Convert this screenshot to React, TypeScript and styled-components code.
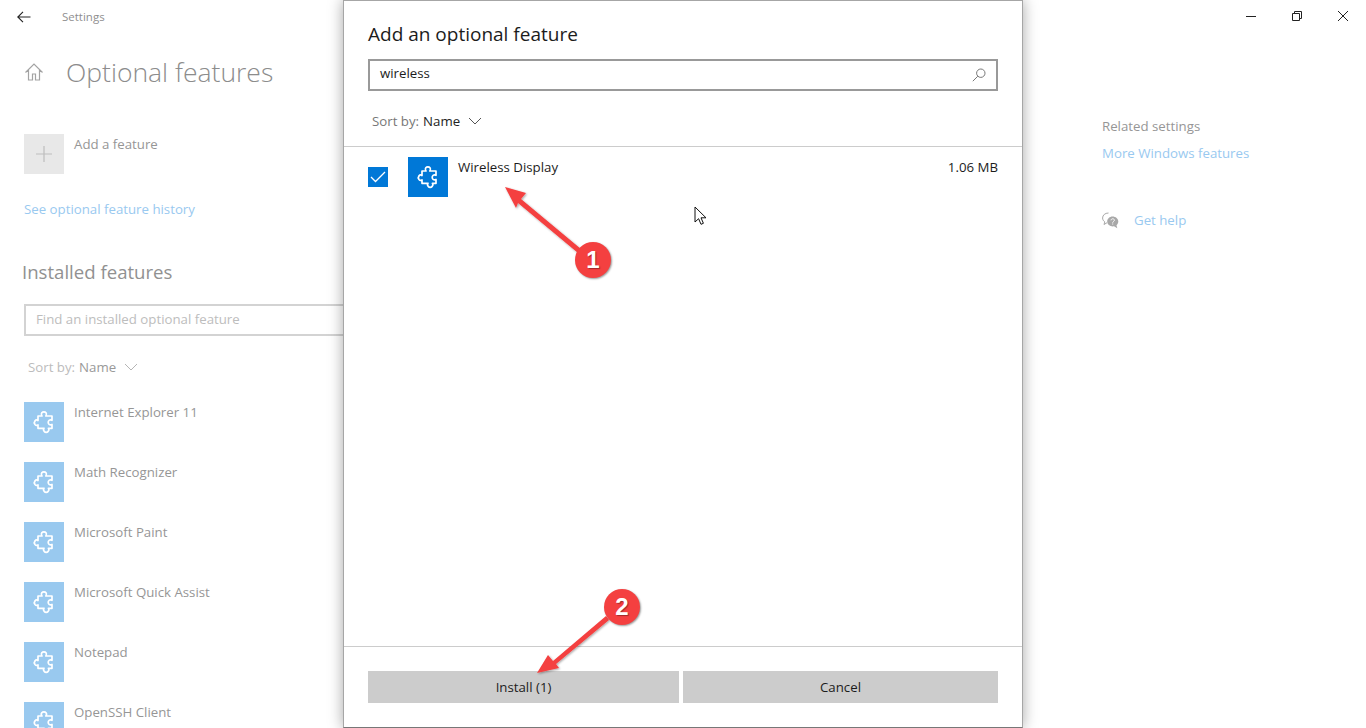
import styled, { createGlobalStyle } from 'styled-components'
import { ReactNode } from 'react'

const GlobalStyle = createGlobalStyle`
  html, body {
    margin: 0;
    background: #fff;
    font-family: 'Open Sans', 'Noto Sans', sans-serif;
  }
`

const installed = [
  'Internet Explorer 11',
  'Math Recognizer',
  'Microsoft Paint',
  'Microsoft Quick Assist',
  'Notepad',
  'OpenSSH Client',
]

const PuzzleIcon = () => (
  <svg width="24" height="24" viewBox="-0.5 0 24 24" fill="none" stroke="#fff" strokeWidth="1.7" strokeLinejoin="round">
    <path d="M5.500 6h4c-.9-1 -.9-2.200 -.2-3.200c1-1.300 3.200-1.300 4.200 0c.7 1 .7 2.200 -.2 3.200H19.500v4.300c-.9-.6 -2-.6 -2.900 .1c-1.200 1-1.200 2.900 0 3.900c.9 .7 2 .7 2.900 .1v3.900h-3.600c.7 1 .6 2.200 -.2 3.100c-1.100 1.200 -3 1.200 -4 0c-.8-.9 -.9-2.100 -.2-3.100H5.500v-3.400c-1 .7 -2.300 .5 -3-.4c-.8-1.100 -.8-2.600 0-3.600c.7-.9 2-1.100 3-.4Z" />
  </svg>
)

const Chevron = ({ color }: { color: string }) => (
  <svg width="14" height="8" viewBox="0 0 14 8" fill="none" stroke={color} strokeWidth="1">
    <path d="M1 1l6 6l6-6" />
  </svg>
)

function SortRow({ dim }: { dim?: boolean }) {
  return (
    <SortBy $dim={dim}>
      <span>Sort by:</span>
      <SortValue $dim={dim}>Name</SortValue>
      <Chevron color={dim ? '#b5b5b5' : '#555'} />
    </SortBy>
  )
}

function Feature({ name, children }: { name: string; children?: ReactNode }) {
  return (
    <FeatureRow>
      <Tile $tone="soft">
        <PuzzleIcon />
      </Tile>
      <FeatureName>{name}</FeatureName>
      {children}
    </FeatureRow>
  )
}

export default function App() {
  return (
    <Screen>
      <GlobalStyle />
      <TitleBar>
        <svg width="14" height="12" viewBox="0 0 14 12" fill="none" stroke="#222" strokeWidth="1.1">
          <path d="M13.500 6H1M6 .8L.8 6L6 11.200" />
        </svg>
        <WindowName>Settings</WindowName>
      </TitleBar>

      <Columns>
        <LeftColumn>
          <PageHeader>
            <svg width="20" height="20" viewBox="0 0 20 20" fill="none" stroke="#a3a3a3" strokeWidth="1.2">
              <path d="M1.500 10.500L10 2l8.500 8.500M4.500 8v10h4v-6h3v6h4V8" />
            </svg>
            <PageTitle>Optional features</PageTitle>
          </PageHeader>

          <AddRow>
            <AddTile>
              <svg width="16" height="16" viewBox="0 0 16 16" stroke="#bdbdbd" strokeWidth="1.2">
                <path d="M8 0v16M0 8h16" />
              </svg>
            </AddTile>
            <FeatureName>Add a feature</FeatureName>
          </AddRow>

          <HistoryLink>See optional feature history</HistoryLink>
          <SectionTitle>Installed features</SectionTitle>
          <FindBox>Find an installed optional feature</FindBox>
          <DimSort>
            <SortRow dim />
          </DimSort>

          <FeatureList>
            {installed.map((name) => (
              <Feature key={name} name={name} />
            ))}
          </FeatureList>
        </LeftColumn>

        <RightColumn>
          <RelatedTitle>Related settings</RelatedTitle>
          <RelatedLink>More Windows features</RelatedLink>
          <HelpRow>
            <svg width="17" height="17" viewBox="0 0 17 17">
              <path d="M6.500 1C3 1 .6 3.200 .6 6c0 1.700 .9 3 2.200 3.900L2 12.500l3-1.800" fill="none" stroke="#a8a8a8" strokeWidth="1" />
              <path d="M10.500 4.500c3.200 0 5.800 2.200 5.800 5c0 1.500 -.7 2.800 -1.800 3.700l.8 3.100l-3.300-2c-3.600 .6 -6.800-1.700 -6.800-4.800c0-2.800 2.500-5 5.300-5Z" fill="#a8a8a8" />
              <path d="M9 8.300c.1-1 .8-1.500 1.700-1.500c1 0 1.700 .6 1.700 1.400c0 1.200 -1.700 1.200 -1.700 2.500" fill="none" stroke="#fff" strokeWidth="1" />
              <path d="M10.200 11.600h1v1h-1z" fill="#fff" />
            </svg>
            <RelatedLink>Get help</RelatedLink>
          </HelpRow>
        </RightColumn>
      </Columns>

      <WindowControls>
        <svg width="10" height="10" viewBox="0 0 10 10" stroke="#222" strokeWidth="1">
          <path d="M0 5.500h10" />
        </svg>
        <svg width="10" height="10" viewBox="0 0 10 10" fill="none" stroke="#222" strokeWidth="1">
          <path d="M.5 2.500h7v7h-7zM2.500 2.500v-2h7v7h-2" />
        </svg>
        <svg width="10" height="10" viewBox="0 0 10 10" stroke="#222" strokeWidth="1">
          <path d="M0 0l10 10M10 0L0 10" />
        </svg>
      </WindowControls>

      <Dialog>
        <DialogTitle>Add an optional feature</DialogTitle>
        <DialogSearch>
          <SearchText>wireless</SearchText>
          <svg width="14" height="14" viewBox="0 0 14 14" fill="none" stroke="#777" strokeWidth="1">
            <circle cx="8.800" cy="5.200" r="4.200" />
            <path d="M5.800 8.200L.8 13.200" />
          </svg>
        </DialogSearch>
        <DialogSort>
          <SortRow />
        </DialogSort>
        <ResultList>
          <ResultRow>
            <CheckBox>
              <svg width="16" height="12" viewBox="0 0 16 12" fill="none" stroke="#fff" strokeWidth="1.300">
                <path d="M1 6l4.500 4.500L15 1" />
              </svg>
            </CheckBox>
            <Tile $tone="solid">
              <PuzzleIcon />
            </Tile>
            <ResultName>Wireless Display</ResultName>
            <ResultSize>1.06 MB</ResultSize>
          </ResultRow>
        </ResultList>
        <DialogFooter>
          <FooterButton>Install (1)</FooterButton>
          <FooterButton>Cancel</FooterButton>
        </DialogFooter>
      </Dialog>

      <PointerIcon width="14" height="20" viewBox="0 0 14 20">
        <path d="M1 1v15l3.600-3.300l2.400 5.600l2.400-1l-2.400-5.500h5Z" fill="#fff" stroke="#111" strokeWidth="1" />
      </PointerIcon>

      <ArrowLayer width="1366" height="728" viewBox="0 0 1366 728">
        <defs>
          <filter id="arrowShadow" x="-20%" y="-20%" width="140%" height="140%">
            <feDropShadow dx="1" dy="1" stdDeviation="0.800" floodColor="#000" floodOpacity="0.350" />
          </filter>
        </defs>
        <g filter="url(#arrowShadow)" fill="#f44040" stroke="none">
          <path d="M505 187L526 193L521 199L581 249L578 253L518 203L516 208Z" />
          <path d="M537 673L548 655L553 661L606 616L609 620L556 664L559 668Z" />
        </g>
      </ArrowLayer>

      <Badge $x={575} $y={242}>1</Badge>
      <Badge $x={604} $y={589}>2</Badge>
    </Screen>
  )
}

const Screen = styled.div`
  position: relative;
  width: 1366px;
  height: 728px;
  overflow: hidden;
  background: #fff;
  font-size: 13.250px;
  line-height: 20px;
`

const TitleBar = styled.div`
  display: flex;
  align-items: center;
  height: 33px;
  padding-left: 17px;
`

const WindowName = styled.div`
  margin-left: 31px;
  font-size: 11.500px;
  color: #8f8f8f;
`

const WindowControls = styled.div`
  position: absolute;
  top: 11px;
  right: 18px;
  display: flex;
  gap: 36px;
`

const Columns = styled.div`
  display: flex;
`

const LeftColumn = styled.div`
  flex: 0 0 344px;
  padding-left: 24px;
  box-sizing: border-box;
`

const RightColumn = styled.div`
  margin-left: 758px;
  padding-top: 83px;
`

const PageHeader = styled.div`
  display: flex;
  align-items: center;
  gap: 22px;
  height: 40px;
  margin-top: 19px;
`

const PageTitle = styled.div`
  font-size: 26.500px;
  font-weight: 300;
  color: #8c8c8c;
  white-space: nowrap;
`

const AddRow = styled.div`
  display: flex;
  gap: 10px;
  margin-top: 42px;
`

const AddTile = styled.div`
  display: flex;
  align-items: center;
  justify-content: center;
  width: 40px;
  height: 40px;
  background: #e8e8e8;
`

const HistoryLink = styled.div`
  margin-top: 25px;
  color: #99c9f0;
`

const SectionTitle = styled.div`
  margin: 39px 0 0 -2px;
  font-size: 18.600px;
  line-height: 28px;
  color: #919191;
`

const FindBox = styled.div`
  box-sizing: border-box;
  height: 32px;
  margin: 18px -10px 0 0;
  padding: 3px 10px;
  border: 2px solid #d3d3d3;
  color: #bdbdbd;
  white-space: nowrap;
`

const DimSort = styled.div`
  margin: 21px 0 0 4px;
`

const SortBy = styled.div<{ $dim?: boolean }>`
  display: flex;
  align-items: center;
  color: ${(p) => (p.$dim ? '#bcbcbc' : '#777')};
  font-size: 13.250px;

  svg {
    margin-left: 8px;
  }
`

const SortValue = styled.span<{ $dim?: boolean }>`
  margin-left: 4px;
  color: ${(p) => (p.$dim ? '#999' : '#222')};
`

const FeatureList = styled.div`
  display: flex;
  flex-direction: column;
  gap: 20px;
  margin-top: 25px;
`

const FeatureRow = styled.div`
  display: flex;
  gap: 10px;
`

const Tile = styled.div<{ $tone: 'soft' | 'solid' }>`
  display: flex;
  flex: none;
  align-items: center;
  justify-content: center;
  width: 40px;
  height: 40px;
  background: ${(p) => (p.$tone === 'solid' ? '#0078d7' : '#99c9ef')};
`

const FeatureName = styled.div`
  color: #969696;
  white-space: nowrap;
`

const RelatedTitle = styled.div`
  color: #969696;
  white-space: nowrap;
`

const RelatedLink = styled.div`
  margin-top: 7px;
  color: #99c9f0;
  white-space: nowrap;

  svg + & {
    margin-top: 0;
  }
`

const HelpRow = styled.div`
  display: flex;
  align-items: center;
  gap: 15px;
  margin-top: 47px;
`

const Dialog = styled.div`
  position: absolute;
  top: 0;
  left: 343px;
  display: flex;
  flex-direction: column;
  box-sizing: border-box;
  width: 680px;
  height: 728px;
  border: 1px solid #a6a6a6;
  border-bottom-color: #777;
  background: #fff;
  box-shadow: 0 0 14px rgba(0, 0, 0, 0.35);
`

const DialogTitle = styled.div`
  margin: 19px 24px 0;
  font-size: 19px;
  line-height: 28px;
  color: #1c1c1c;
`

const DialogSearch = styled.div`
  display: flex;
  align-items: center;
  justify-content: space-between;
  box-sizing: border-box;
  height: 32px;
  margin: 11px 24px 0;
  padding: 0 10px;
  border: 2px solid #999;
  color: #1c1c1c;
`

const SearchText = styled.span`
  margin-top: -4px;
`

const DialogSort = styled.div`
  margin: 20px 28px 15px;
`

const ResultList = styled.div`
  flex: 1;
  padding: 10px 24px 0;
  border-top: 1px solid #ccc;
`

const ResultRow = styled.div`
  display: flex;
  align-items: flex-start;
`

const CheckBox = styled.div`
  display: flex;
  align-items: center;
  justify-content: center;
  width: 20px;
  height: 20px;
  margin: 10px 20px 0 0;
  background: #0078d7;
`

const ResultName = styled.div`
  margin-left: 10px;
  color: #1c1c1c;
`

const ResultSize = styled.div`
  margin-left: auto;
  color: #1c1c1c;
`

const DialogFooter = styled.div`
  display: grid;
  grid-template-columns: 311px 1fr;
  gap: 4px;
  padding: 24px;
  border-top: 1px solid #ccc;
`

const FooterButton = styled.div`
  height: 32px;
  background: #ccc;
  color: #1c1c1c;
  line-height: 32px;
  text-align: center;
`

const PointerIcon = styled.svg`
  position: absolute;
  top: 206px;
  left: 694px;
`

const ArrowLayer = styled.svg`
  position: absolute;
  top: 0;
  left: 0;
  pointer-events: none;
`

const Badge = styled.div<{ $x: number; $y: number }>`
  position: absolute;
  top: ${(p) => p.$y}px;
  left: ${(p) => p.$x}px;
  width: 36px;
  height: 36px;
  border-radius: 50%;
  background: #f44040;
  box-shadow: 1px 1px 2px rgba(0, 0, 0, 0.4);
  color: #fff;
  font-family: 'Liberation Sans', sans-serif;
  font-size: 24px;
  font-weight: 700;
  line-height: 36px;
  text-align: center;
  text-shadow: 1px 1px 1px rgba(0, 0, 0, 0.35);
`
